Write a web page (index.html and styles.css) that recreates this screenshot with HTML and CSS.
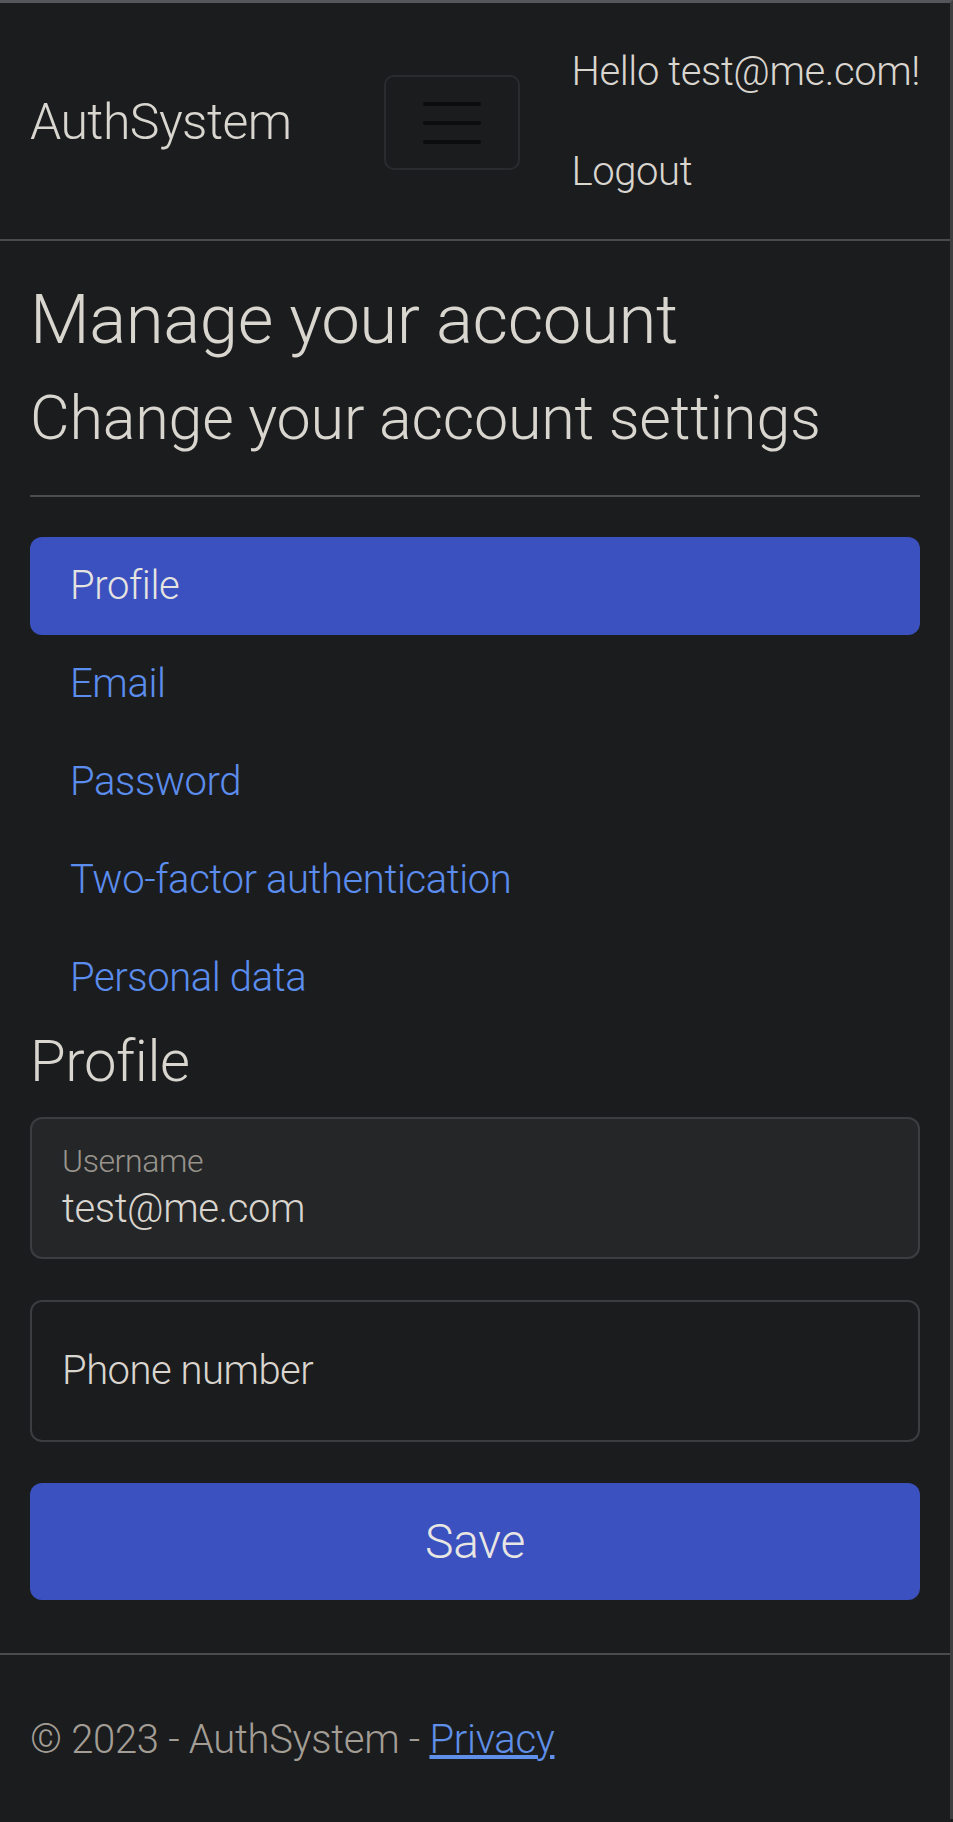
FILE: index.html
```html
<!DOCTYPE html>
<html lang="en">
<head>
<meta charset="utf-8">
<title>Profile - AuthSystem</title>
<link rel="stylesheet" href="styles.css">
</head>
<body>
<div class="page">
  <header class="navbar">
    <a class="brand" href="#">AuthSystem</a>
    <button class="toggler" type="button" aria-label="Toggle navigation">
      <svg class="toggler-icon" width="58" height="44" viewBox="0 0 58 44">
        <path d="M2 4H56M2 23H56M2 42H56" stroke="#0c0d0e" stroke-width="4" stroke-linecap="round"/>
      </svg>
    </button>
    <ul class="user-nav">
      <li><a class="user-link" href="#">Hello test@me.com!</a></li>
      <li><a class="user-link" href="#">Logout</a></li>
    </ul>
  </header>

  <main class="container">
    <h1 class="title">Manage your account</h1>
    <h2 class="subtitle">Change your account settings</h2>
    <hr class="divider">
    <ul class="pills">
      <li><a class="pill active" href="#">Profile</a></li>
      <li><a class="pill" href="#">Email</a></li>
      <li><a class="pill" href="#">Password</a></li>
      <li><a class="pill" href="#">Two-factor authentication</a></li>
      <li><a class="pill" href="#">Personal data</a></li>
    </ul>
    <h3 class="section-title">Profile</h3>
    <form class="form">
      <div class="field field-disabled">
        <span class="field-label">Username</span>
        <span class="field-value">test@me.com</span>
      </div>
      <div class="field field-empty">
        <span class="field-placeholder">Phone number</span>
      </div>
      <button class="save" type="button">Save</button>
    </form>
  </main>

  <footer class="footer">
    <span>&copy; 2023 - AuthSystem - </span><a class="footer-link" href="#">Privacy</a>
  </footer>
</div>
</body>
</html>
```

FILE: styles.css
```css
html, body {
  margin: 0;
  padding: 0;
  background: #1b1c1e;
}

body {
  font-family: Roboto, "Noto Sans", sans-serif;
  font-weight: 300;
  color: #d9d5cf;
  letter-spacing: -0.4px;
}

.page {
  min-height: 1819px;
  border-top: 3px solid #555659;
  border-right: 3px solid #3d3e40;
  box-sizing: border-box;
}

/* Navbar */
.navbar {
  display: flex;
  align-items: center;
  justify-content: space-between;
  padding: 19px 30px 17px;
  border-bottom: 2px solid #4a4b4d;
}

.brand {
  font-size: 50px;
  line-height: 75px;
  letter-spacing: -0.55px;
  color: #d9d5cf;
  text-decoration: none;
  margin-right: 40px;
}

.toggler {
  width: 136px;
  height: 95px;
  box-sizing: border-box;
  background: transparent;
  border: 2px solid #2a2b2e;
  border-radius: 10px;
  display: flex;
  align-items: center;
  justify-content: center;
  padding: 0;
}

.toggler-icon {
  display: block;
}

.user-nav {
  list-style: none;
  margin: 0;
  padding: 0;
  display: flex;
  flex-direction: column;
}

.user-link {
  display: block;
  padding: 20px 0;
  font-size: 40px;
  line-height: 60px;
  color: #d9d5cf;
  text-decoration: none;
}

/* Main */
.container {
  padding: 38px 30px 53px;
}

.title {
  margin: 0 0 20px;
  font-size: 69px;
  font-weight: 300;
  line-height: 1.2;
  letter-spacing: -0.45px;
}

.subtitle {
  margin: 0 0 20px;
  font-size: 61px;
  font-weight: 300;
  line-height: 1.2;
  letter-spacing: -0.2px;
}

.divider {
  margin: 40px 0;
  border: 0;
  border-top: 2px solid #4b4c4e;
}

.pills {
  list-style: none;
  margin: 0;
  padding: 0;
  display: flex;
  flex-direction: column;
}

.pill {
  display: block;
  padding: 20px 40px;
  font-size: 40px;
  line-height: 58px;
  color: #5b8dee;
  text-decoration: none;
  border-radius: 12px;
}

.pill.active {
  background: #3a51bf;
  color: #e6e4e1;
}

.section-title {
  margin: 0 0 20px;
  font-size: 58px;
  font-weight: 300;
  line-height: 1.2;
}

.form {
  display: flex;
  flex-direction: column;
  gap: 41px;
}

.field {
  height: 142px;
  box-sizing: border-box;
  border: 2px solid #3c3d40;
  border-radius: 12px;
  padding: 0 30px;
  display: flex;
  flex-direction: column;
}

.field-disabled {
  background: #252628;
  padding-top: 22px;
}

.field-label {
  font-size: 32px;
  line-height: 40px;
  color: #98948d;
}

.field-value {
  margin-top: 3px;
  font-size: 40px;
  line-height: 50px;
  color: #d9d5cf;
}

.field-empty {
  justify-content: center;
}

.field-placeholder {
  font-size: 40px;
  line-height: 60px;
  color: #d9d5cf;
  letter-spacing: -0.5px;
}

.save {
  height: 117px;
  border: 0;
  border-radius: 12px;
  background: #3a51bf;
  color: #e8e6e3;
  font-family: Roboto, "Noto Sans", sans-serif;
  font-weight: 300;
  font-size: 48px;
  padding: 0;
  letter-spacing: -0.4px;
}

/* Footer */
.footer {
  border-top: 2px solid #4a4b4d;
  padding: 55px 30px 0;
  font-size: 40px;
  line-height: 60px;
  color: #a39e95;
  white-space: nowrap;
  letter-spacing: -0.3px;
}

.footer-link {
  color: #5f8fe8;
  text-decoration: underline;
}
```
